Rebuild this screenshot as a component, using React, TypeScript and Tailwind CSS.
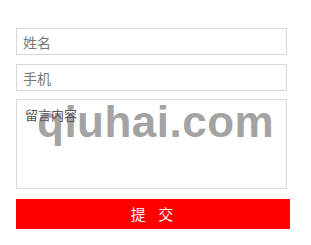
import React from 'react';

const App: React.FC = () => {
  return (
    <div
      className="relative w-[311px] h-[245px] bg-white"
      style={{ fontFamily: '"Noto Sans CJK SC", "Liberation Sans", sans-serif' }}
    >
      {/* watermark */}
      <div
        className="absolute z-0 left-[37px] top-[100px] text-[44px] font-bold leading-none tracking-[0.5px] text-[#a3a3a3] pointer-events-none select-none"
        style={{ fontFamily: '"Liberation Sans", Arial, sans-serif' }}
      >
        qiuhai.com
      </div>

      <form className="relative z-10 flex flex-col pl-4 pt-[28px]">
        <input
          type="text"
          placeholder="姓名"
          className="w-[271px] h-[27px] border border-[#d6d6d6] px-[6px] text-[14px] text-[#333] placeholder:text-[#777] outline-none"
        />
        <input
          type="text"
          placeholder="手机"
          className="mt-[9px] w-[271px] h-[27px] border border-[#d6d6d6] px-[6px] text-[14px] text-[#333] placeholder:text-[#777] outline-none"
        />
        <textarea
          placeholder="留言内容"
          className="mt-[8px] w-[271px] h-[90px] bg-transparent border border-[#d6d6d6] px-[8px] py-[7px] text-[13px] leading-[16px] text-[#333] placeholder:text-[#555] outline-none resize-none"
        />
        <button
          type="button"
          className="mt-[10px] w-[274px] h-[30px] bg-[#ff0000] text-white text-[15px] tracking-[2px]"
        >
          提&nbsp;&nbsp;交
        </button>
      </form>
    </div>
  );
};

export default App;
